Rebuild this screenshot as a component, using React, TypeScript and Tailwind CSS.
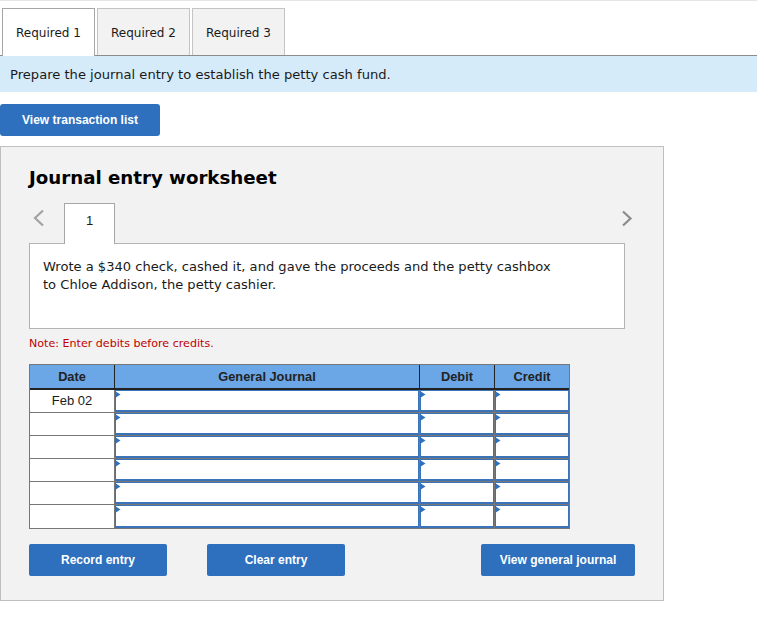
const verdana = 'font-["DejaVu_Sans",sans-serif]'
const arial = 'font-["Liberation_Sans",Arial,sans-serif]'

const rows = ['Feb 02', '', '', '', '', '']

export default function App() {
  return (
    <div className={`min-h-[617px] w-[757px] border-t border-[#e5e5e5] bg-white text-[#1a1a1a] ${verdana}`}>
      <div className="flex h-[55px] items-end gap-[2px] border-b border-[#8c8c8c] pl-[2px] pt-[7px]">
        <Tab label="Required 1" active />
        <Tab label="Required 2" />
        <Tab label="Required 3" />
      </div>

      <div className="flex h-[36px] items-center bg-[#d6ebfa] pl-[10px] pt-[2px] text-[13.1px]">
        Prepare the journal entry to establish the petty cash fund.
      </div>

      <button className={`mt-[12px] block h-[32px] w-[160px] rounded-[3px] bg-[#2e70be] text-[12px] font-bold text-white ${arial}`}>
        View transaction list
      </button>

      <div className="mt-[10px] h-[455px] w-[664px] border border-[#bfbfbf] bg-[#f2f2f2] pl-[28px] pt-[19px]">
        <h1 className="h-[24px] text-[18.2px] font-bold leading-[24px] text-black">Journal entry worksheet</h1>

        <div className="relative mt-[13px] h-[41px] w-[596px]">
          <svg className="absolute left-[3px] top-[6px] text-[#a3a3a3]" width="13" height="18" viewBox="0 0 13 18" fill="none">
            <path d="M11 1.5 L3 9 L11 16.5" stroke="currentColor" strokeWidth="2.2" />
          </svg>
          <svg className="absolute right-[-8px] top-[7px] text-[#8c8c8c]" width="12" height="17" viewBox="0 0 12 17" fill="none">
            <path d="M2 1.5 L9.5 8.5 L2 15.5" stroke="currentColor" strokeWidth="2.2" />
          </svg>
          <div className={`relative z-10 ml-[35px] flex h-[41px] w-[51px] items-center justify-center border border-b-0 border-[#a6a6a6] bg-white pb-[6px] text-[13px] ${arial}`}>
            1
          </div>
        </div>

        <div className="-mt-[1px] h-[86px] w-[596px] border border-[#b3b3b3] bg-white pl-[13px] pt-[14px] text-[13.07px] leading-[18px]">
          <p>Wrote a $340 check, cashed it, and gave the proceeds and the petty cashbox</p>
          <p>to Chloe Addison, the petty cashier.</p>
        </div>

        <p className="mt-[7px] h-[15px] text-[11.1px] leading-[15px] text-[#c00000]">Note: Enter debits before credits.</p>

        <div className={`mt-[13px] w-[541px] border border-[#777] ${arial}`}>
          <div className="grid h-[25px] grid-cols-[84px_305px_75px_75px] border-b-2 border-[#222] bg-[#6ba7e6] text-[12.8px] font-bold leading-[24px] text-[#222]">
            <div className="text-center">Date</div>
            <div className="border-l border-[#222] text-center">General Journal</div>
            <div className="border-l border-[#222] text-center">Debit</div>
            <div className="border-l border-[#222] text-center">Credit</div>
          </div>
          {rows.map((date, i) => (
            <div key={i} className="grid h-[23px] grid-cols-[84px_305px_75px_75px]">
              <div className={`bg-white text-center text-[13px] leading-[22px] ${i < 5 ? 'border-b border-[#777]' : ''}`}>{date}</div>
              <Cell last={i === 5} />
              <Cell last={i === 5} />
              <Cell last={i === 5} />
            </div>
          ))}
        </div>

        <div className={`mt-[15px] flex w-[606px] text-[12px] font-bold text-white ${arial}`}>
          <button className="h-[32px] w-[138px] rounded-[2px] bg-[#2e70be]">Record entry</button>
          <button className="ml-[40px] h-[32px] w-[138px] rounded-[2px] bg-[#2e70be]">Clear entry</button>
          <button className="ml-auto h-[32px] w-[154px] rounded-[2px] bg-[#2e70be]">View general journal</button>
        </div>
      </div>
    </div>
  )
}

function Tab({ label, active }: { label: string; active?: boolean }) {
  return (
    <div
      className={
        active
          ? 'relative -mb-px flex h-[48px] w-[93px] items-center justify-center border border-b-0 border-[#a6a6a6] bg-white text-[12px]'
          : 'flex h-[47px] w-[93px] items-center justify-center border border-b-0 border-[#c4c4c4] bg-[#f2f2f2] pt-[1px] text-[12px]'
      }
    >
      {label}
    </div>
  )
}

function Cell({ last }: { last?: boolean }) {
  return (
    <div className={`border-l border-[#777] ${last ? '' : 'border-b'}`}>
      <div className="relative h-full border border-b-2 border-[#3a73b8] bg-white">
        <svg className="absolute left-[-1px] top-0" width="6" height="7" viewBox="0 0 6 7">
          <path d="M0 0 L5.5 3.5 L0 7 Z" fill="#2e70be" />
        </svg>
      </div>
    </div>
  )
}
